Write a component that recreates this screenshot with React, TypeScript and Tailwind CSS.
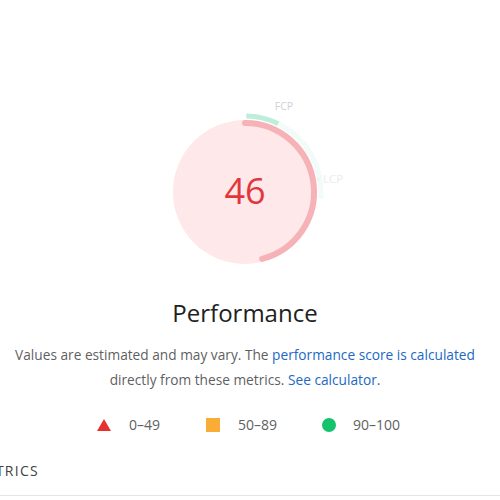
import React from "react"

const font = { fontFamily: '"Open Sans", "Noto Sans", sans-serif' }

function arcPath(cx: number, cy: number, r: number, startDeg: number, endDeg: number) {
  const toXY = (deg: number) => {
    const a = ((deg - 90) * Math.PI) / 180
    return [cx + r * Math.cos(a), cy + r * Math.sin(a)]
  }
  const [x1, y1] = toXY(startDeg)
  const [x2, y2] = toXY(endDeg)
  const large = endDeg - startDeg > 180 ? 1 : 0
  return `M ${x1} ${y1} A ${r} ${r} 0 ${large} 1 ${x2} ${y2}`
}

function Gauge({ score }: { score: number }) {
  const cx = 100
  const cy = 97
  return (
    <svg width="200" height="180" viewBox="0 0 200 180" className="block">
      <circle cx={cx} cy={cy} r={72} fill="#fee8e9" />
      {/* metric segments outside the ring */}
      <path d={arcPath(cx, cy, 76, 1, 26)} stroke="#bdeedb" strokeWidth={5} fill="none" />
      <path d={arcPath(cx, cy, 76, 27, 95)} stroke="#f1fbf7" strokeWidth={5} fill="none" />
      <path
        d={arcPath(cx, cy, 69, 0, score * 3.6)}
        stroke="#f6b3b7"
        strokeWidth={6}
        fill="none"
        strokeLinecap="round"
      />
      <text x={cx} y={cy + 12} textAnchor="middle" fontSize="36" fill="#e3363b" style={font}>
        {score}
      </text>
      <text x={139} y={15} textAnchor="middle" fontSize="10.5" fill="#d0d0d0" style={font}>
        FCP
      </text>
      <text x={171} y={88} fontSize="11.5" fill="#ececec" style={font}>
        ◦ LCP
      </text>
    </svg>
  )
}

export default function App() {
  return (
    <div className="w-[500px] h-[500px] overflow-hidden bg-white text-[#212121]" style={font}>
      <div className="w-[490px] flex flex-col items-center pt-[95px]">
        <Gauge score={46} />
        <div className="mt-[22px] text-[24px] leading-[32px] text-[#212121]">Performance</div>
        <p className="mt-[13px] text-center text-[13.7px] leading-[25px] text-[#5f5f5f] whitespace-nowrap">
          Values are estimated and may vary. The{" "}
          <span className="text-[#2168c4]">performance score is calculated</span>
          <br />
          directly from these metrics. <span className="text-[#2168c4]">See calculator.</span>
        </p>
        <div className="mt-[23px] ml-[7px] flex items-center text-[14px] leading-[20px] text-[#616161]">
          <div className="flex items-center gap-[18px]">
            <svg width="14" height="12" viewBox="0 0 14 12">
              <polygon points="7,0 14,12 0,12" fill="#e5302f" />
            </svg>
            <span>0–49</span>
          </div>
          <div className="ml-[46px] flex items-center gap-[18px]">
            <div className="w-[14px] h-[14px] bg-[#f9ac36]" />
            <span>50–89</span>
          </div>
          <div className="ml-[45px] flex items-center gap-[17px]">
            <div className="w-[14px] h-[14px] rounded-full bg-[#14c36c]" />
            <span>90–100</span>
          </div>
        </div>
      </div>
      <div className="mt-[26px] border-b border-[#e6e6e6] pb-[14px]">
        <div className="ml-[-27px] text-[14px] leading-[20px] uppercase tracking-[0.09em] text-[#424242]">
          Metrics
        </div>
      </div>
    </div>
  )
}
